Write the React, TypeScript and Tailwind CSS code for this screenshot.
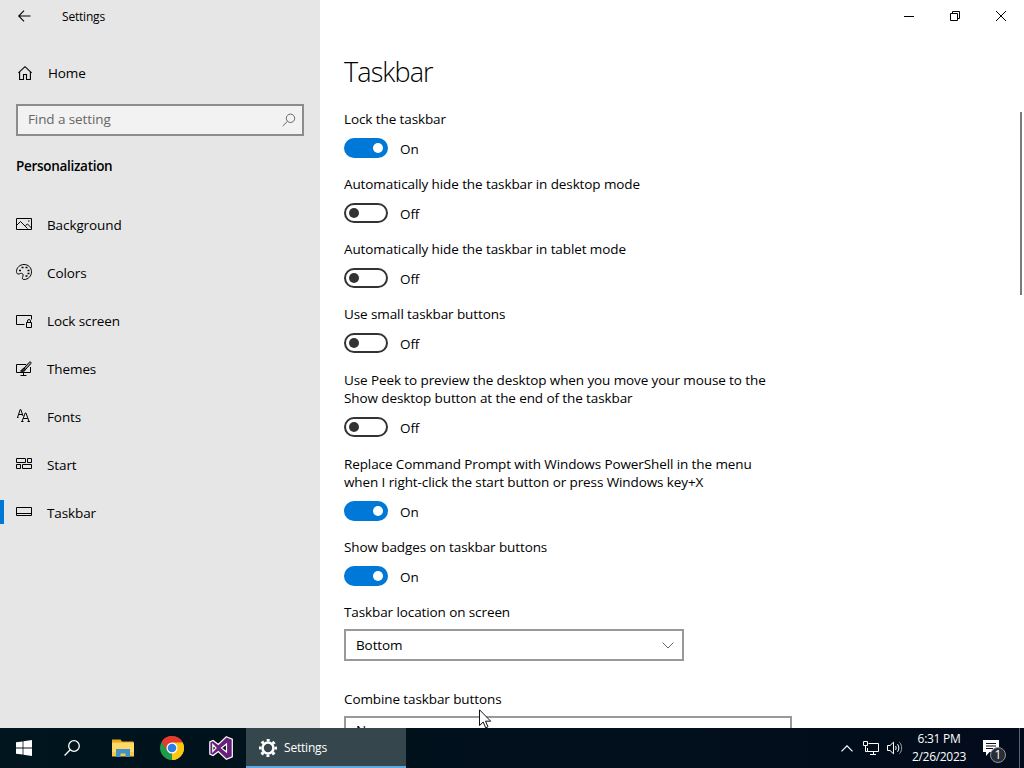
import type { ReactNode } from 'react'
import clsx from 'clsx'

interface NavItem {
  label: string
  icon: ReactNode
  active?: boolean
}

interface ToggleSetting {
  label: string[]
  on: boolean
  className: string
}

const lineIcon = {
  width: 16,
  height: 16,
  viewBox: '0 0 16 16',
  fill: 'none',
  stroke: '#000',
  strokeWidth: 1,
}

const navItems: NavItem[] = [
  {
    label: 'Background',
    icon: (
      <svg {...lineIcon}>
        <path d="M.5 2.5h15v11H.5z" />
        <path d="M.5 9.500 4.500 5.500l7 7M9.500 9.500l2-1.500 4 4M12 5h1.500" />
      </svg>
    ),
  },
  {
    label: 'Colors',
    icon: (
      <svg {...lineIcon}>
        <path d="M8 .5c4.400 0 7.500 3.200 7.500 7.300 0 4.300-3.200 7.700-7.400 7.700-1.500 0-2-.8-1.700-1.900.3-1 .9-1.700.7-2.800-.2-1.400-1.500-1.800-2.600-1.300-1 .4-1.700.7-2.500.5C.9 9.700.5 8.800.5 7.600.5 3.600 3.800.5 8 .5Z" />
        <path d="M3 6.500h2M5.500 3.500h2M9.500 3.500h2M11.500 6.500h2M11.500 9.500h2M9.500 12h2" strokeWidth="1.700" />
      </svg>
    ),
  },
  {
    label: 'Lock screen',
    icon: (
      <svg {...lineIcon}>
        <path d="M8.500 12.500H.5v-9h15v4" />
        <path d="M10.500 10.500h5v5h-5zM11.500 10.500V9a1.500 1.500 0 0 1 3 0v1.500" />
      </svg>
    ),
  },
  {
    label: 'Themes',
    icon: (
      <svg {...lineIcon}>
        <path d="M10 4.500H.5v8h14V7M7.500 12.500v3M4.500 15.500h6" />
        <path d="M14.800 2.200c-.6-.6-1.300-.2-1.800.3L8.200 8l1.500 1.400 4.900-5.500c.4-.5.700-1.200.200-1.700Z" fill="#999" />
        <path d="M8.200 8.200c-2-.2-1.700 2-3.700 2.800 2 .9 4.800.3 5-1.500Z" fill="#333" />
      </svg>
    ),
  },
  {
    label: 'Fonts',
    icon: (
      <svg {...lineIcon}>
        <path d="m1.500 9.500 2.700-8h.6l2.200 6.500M2.700 6.500h3.600M1 9.500h1.500" />
        <path d="m6 13.500 3.200-8.500h.8l3 8.500M7.300 10.500h4.400M5.200 13.500h2.300M11.500 13.500H14" />
      </svg>
    ),
  },
  {
    label: 'Start',
    icon: (
      <svg {...lineIcon}>
        <path d="M.5 2.500h9v4h-9zM11.500 2.500h4v4h-4zM.5 8.500h4v4h-4zM6.500 8.500h9v4h-9z" />
      </svg>
    ),
  },
  {
    label: 'Taskbar',
    active: true,
    icon: (
      <svg {...lineIcon}>
        <path d="M.5 3.500h15v8H.5zM.5 9.500h15" />
      </svg>
    ),
  },
]

const toggles: ToggleSetting[] = [
  { label: ['Lock the taskbar'], on: true, className: 'mb-[17px]' },
  { label: ['Automatically hide the taskbar in desktop mode'], on: false, className: 'mb-[17px]' },
  { label: ['Automatically hide the taskbar in tablet mode'], on: false, className: 'mb-[17px]' },
  { label: ['Use small taskbar buttons'], on: false, className: 'mb-[18px]' },
  {
    label: [
      'Use Peek to preview the desktop when you move your mouse to the',
      'Show desktop button at the end of the taskbar',
    ],
    on: false,
    className: 'mb-[18px]',
  },
  {
    label: [
      'Replace Command Prompt with Windows PowerShell in the menu',
      'when I right-click the start button or press Windows key+X',
    ],
    on: true,
    className: 'mb-[17px]',
  },
  { label: ['Show badges on taskbar buttons'], on: true, className: 'mb-[17px]' },
]

function Toggle({ on }: { on: boolean }) {
  return (
    <div className="mt-2.5 flex h-5 items-center gap-3">
      <span
        className={clsx(
          'flex h-5 w-11 items-center rounded-full',
          on ? 'justify-end bg-[#0078d7] pr-[5px]' : 'justify-start border-2 border-[#333] bg-white pl-[3px]',
        )}
      >
        <span className={clsx('h-2.5 w-2.5 rounded-full', on ? 'bg-white' : 'bg-[#333]')} />
      </span>
      <span className="relative top-px leading-[18px]">{on ? 'On' : 'Off'}</span>
    </div>
  )
}

function Sidebar() {
  return (
    <aside className="flex w-80 shrink-0 flex-col bg-[#e6e6e6]">
      <div className="flex h-8 items-center pl-[18px]">
        <svg width="13" height="12" viewBox="0 0 13 12" fill="none" stroke="#000" strokeWidth="1.100">
          <path d="M.7 6h11.800M6 .700.700 6 6 11.300" />
        </svg>
        <span className="mt-0.5 ml-[31px] text-[12px] tracking-[-0.2px]">Settings</span>
      </div>

      <div className="mt-[17px] flex h-12 items-center pl-[18px]">
        <svg width="14" height="14" viewBox="0 0 14 14" fill="none" stroke="#000" strokeWidth="1.100">
          <path d="M.4 6.800 7 .700l6.600 6.100M1.600 6v7.500h3.900V8.500h3v5h3.900V6" />
        </svg>
        <span className="ml-4">Home</span>
      </div>

      <div className="mx-4 mt-[7px] flex h-8 items-center justify-between border-2 border-[#8c8c8c] bg-[#f2f2f2] pr-1.5 pl-2.5">
        <span className="mb-0.5 text-[#666]">Find a setting</span>
        <svg width="14" height="14" viewBox="0 0 14 14" fill="none" stroke="#666">
          <circle cx="8.500" cy="5.300" r="4.200" />
          <path d="M5.500 8.300.700 13" />
        </svg>
      </div>

      <h2 className="mt-[21px] ml-4 leading-[18px] font-semibold tracking-[-0.3px]">Personalization</h2>

      <nav className="mt-[26px]">
        {navItems.map((item) => (
          <div key={item.label} className="flex h-12 items-center">
            <span className={clsx('mb-0.5 h-6 w-1', item.active && 'bg-[#0078d7]')} />
            <span className="mr-[15px] mb-0.5 ml-3">{item.icon}</span>
            <span className="mt-px">{item.label}</span>
          </div>
        ))}
      </nav>
    </aside>
  )
}

function SettingsPanel() {
  return (
    <main className="flex min-w-0 flex-1 flex-col">
      <div className="flex h-8 shrink-0 justify-end">
        <span className="grid w-[46px] place-items-center">
          <svg width="10" height="10" viewBox="0 0 10 10" stroke="#000">
            <path d="M0 5.500h10" />
          </svg>
        </span>
        <span className="grid w-[46px] place-items-center">
          <svg width="10" height="10" viewBox="0 0 10 10" fill="none" stroke="#000">
            <path d="M.5 2.500h7v7h-7zM2.500 2.500v-2h7v7h-2" />
          </svg>
        </span>
        <span className="grid w-[46px] place-items-center">
          <svg width="10" height="10" viewBox="0 0 10 10" stroke="#000">
            <path d="m0 0 10 10M10 0 0 10" />
          </svg>
        </span>
      </div>

      <div className="flex flex-1 justify-between pl-6">
        <div className="leading-[18px]">
          <h1 className="mt-[22px] mb-[20px] text-[27px] leading-9 font-light tracking-[-0.9px]">Taskbar</h1>
          {toggles.map((item) => (
            <section key={item.label[0]} className={item.className}>
              {item.label.map((line) => (
                <p key={line} className="whitespace-nowrap">{line}</p>
              ))}
              <Toggle on={item.on} />
            </section>
          ))}

          <p>Taskbar location on screen</p>
          <div className="mt-2 flex h-8 w-[340px] items-center justify-between border-2 border-[#999] px-2.5">
            <span>Bottom</span>
            <svg className="-mr-0.5" width="12" height="7" viewBox="0 0 12 7" fill="none" stroke="#666">
              <path d="m.5.500 5.500 5.500L11.500.500" />
            </svg>
          </div>

          <p className="mt-[29px]">Combine taskbar buttons</p>
          <div className="mt-2 flex h-8 w-[448px] items-center border-2 border-[#999] px-2.5">
            <span className="mb-1">Never</span>
          </div>
        </div>
        <div className="mt-20 mr-0.5 h-[183px] w-0.5 bg-[#7a7a7a]" />
      </div>
    </main>
  )
}

function DesktopTaskbar() {
  return (
    <footer className="flex h-10 shrink-0 items-center bg-gradient-to-r from-[#00151d] to-[#020b1b] text-[12px] text-white">
      <div className="grid w-12 place-items-center">
        <svg width="16" height="16" viewBox="0 0 16 16" fill="#fff">
          <path d="M0 2.300 6.600 1.400v6.200H0zM7.400 1.300 16 0v7.600H7.400zM0 8.400h6.600v6.200L0 13.700zM7.400 8.400H16V16l-8.600-1.300z" />
        </svg>
      </div>
      <div className="grid w-12 place-items-center">
        <svg width="16" height="16" viewBox="0 0 16 16" fill="none" stroke="#fff" strokeWidth="1.300">
          <circle cx="10" cy="6" r="5.300" />
          <path d="M6.200 9.800.600 15.500" />
        </svg>
      </div>
      <div className="grid w-[54px] place-items-center">
        <svg width="22" height="18" viewBox="0 0 22 18">
          <path d="M0 .5h8.500L10 2.500h11.500v14H0z" fill="#e8a820" />
          <path d="M0 3.500h22v13H0z" fill="#ffd968" />
          <path d="M0 13h22v4.500H0z" fill="#f7c84b" />
          <path d="M4 10h14v8h-4.500v-3.500h-5V18H4z" fill="#3f93c8" />
        </svg>
      </div>
      <div className="grid w-11 place-items-center">
        <svg width="24" height="24" viewBox="0 0 24 24">
          <path d="M12 12 1.610 6A12 12 0 0 1 22.390 6Z" fill="#e33b2e" />
          <path d="M12 12 22.390 6A12 12 0 0 1 12 24Z" fill="#fdc80f" />
          <path d="M12 12V24A12 12 0 0 1 1.610 6Z" fill="#1e9b4b" />
          <path d="M12 6.500h10.650A12 12 0 0 0 1.610 6l5.600 8.700Z" fill="#e33b2e" />
          <path d="M12 6.500h10.650A12 12 0 0 1 12 24l4.800-9.300Z" fill="#fdc80f" />
          <circle cx="12" cy="12" r="5.500" fill="#fff" />
          <circle cx="12" cy="12" r="4.300" fill="#2f7de8" />
        </svg>
      </div>
      <div className="grid w-[52px] place-items-center pl-0.5">
        <svg width="24" height="24" viewBox="0 0 24 24">
          <path
            d="M17.300.700 23.300 3.200v17.600l-6 2.500-8-7.700-5.200 4L.8 18.100V5.900l3.300-1.500 5.200 4ZM3.800 8.600v6.800L7 12ZM17.500 8 12.500 12l5 4Z"
            fill="#68217a"
            fillRule="evenodd"
            stroke="#fff"
            strokeWidth="1.200"
          />
        </svg>
      </div>
      <div className="flex h-10 w-40 items-center border-b-2 border-[#5fa8e0] bg-[#36464d] pl-[13px]">
        <svg className="mt-px" width="18" height="18" viewBox="0 0 18 18" fill="none" stroke="#fff">
          <circle cx="9" cy="9" r="5.500" strokeWidth="2.600" />
          <circle cx="9" cy="9" r="7.800" strokeWidth="2.400" strokeDasharray="3.060 3.060" strokeDashoffset="1.530" />
        </svg>
        <span className="mt-0.5 ml-[7px] tracking-[-0.2px]">Settings</span>
      </div>

      <div className="ml-auto flex h-10 items-center">
        <svg width="12" height="7" viewBox="0 0 12 7" fill="none" stroke="#fff" strokeWidth="1.200">
          <path d="M.5 6.300 6 .800l5.500 5.500" />
        </svg>
        <svg className="ml-[10px]" width="16" height="14" viewBox="0 0 16 14" fill="none" stroke="#fff">
          <path d="M5.500 2.500h10v8h-11V7M.5.500h4v4h-4zM2.500 4.500v6h2M10.500 10.500v3M7 13.500h6" />
        </svg>
        <svg className="ml-2" width="16" height="14" viewBox="0 0 16 14" fill="none" stroke="#fff">
          <path d="M.5 4.500h2.500L6.500 1.200v11.600L3 9.500H.5zM8.500 5c.8 1.200.8 2.800 0 4M10.500 3.200c1.800 2.200 1.800 5.400 0 7.600" />
          <path d="M12.600 1.300c2.700 3.300 2.700 8.100 0 11.400" stroke="#9aa2aa" />
        </svg>
        <div className="flex w-[72px] flex-col items-center leading-[18px] tracking-[-0.3px]">
          <span>6:31 PM</span>
          <span>2/26/2023</span>
        </div>
        <div className="relative ml-2 h-4 w-[18px]">
          <svg width="18" height="18" viewBox="0 0 18 18">
            <path d="M0 0h16v12H6.500L3 16v-4H0z" fill="#fff" />
            <path d="M3 3.500h10M3 6h10M3 8.500h7" stroke="#07101c" />
          </svg>
          <span className="absolute top-[7px] left-[7px] grid h-4 w-4 place-items-center rounded-full border border-[#8f949a] bg-[#292e36] text-[12px] leading-none">
            1
          </span>
        </div>
        <div className="mr-1 ml-[18px] h-10 w-px bg-[#5a626b]" />
      </div>
    </footer>
  )
}

export default function App() {
  return (
    <div className="relative flex h-[768px] w-[1024px] flex-col overflow-hidden bg-white font-['Open_Sans','Noto_Sans',sans-serif] text-[13.5px] tracking-[-0.1px] text-black">
      <div className="flex h-[728px] overflow-hidden">
        <Sidebar />
        <SettingsPanel />
      </div>
      <DesktopTaskbar />
      <svg className="absolute top-[709px] left-[479px]" width="13" height="20" viewBox="0 0 13 20">
        <path d="M.5.800v15.700l3.700-3.500 2.500 5.800 2.300-1-2.500-5.600h5.200Z" fill="#fff" stroke="#111" />
      </svg>
    </div>
  )
}
